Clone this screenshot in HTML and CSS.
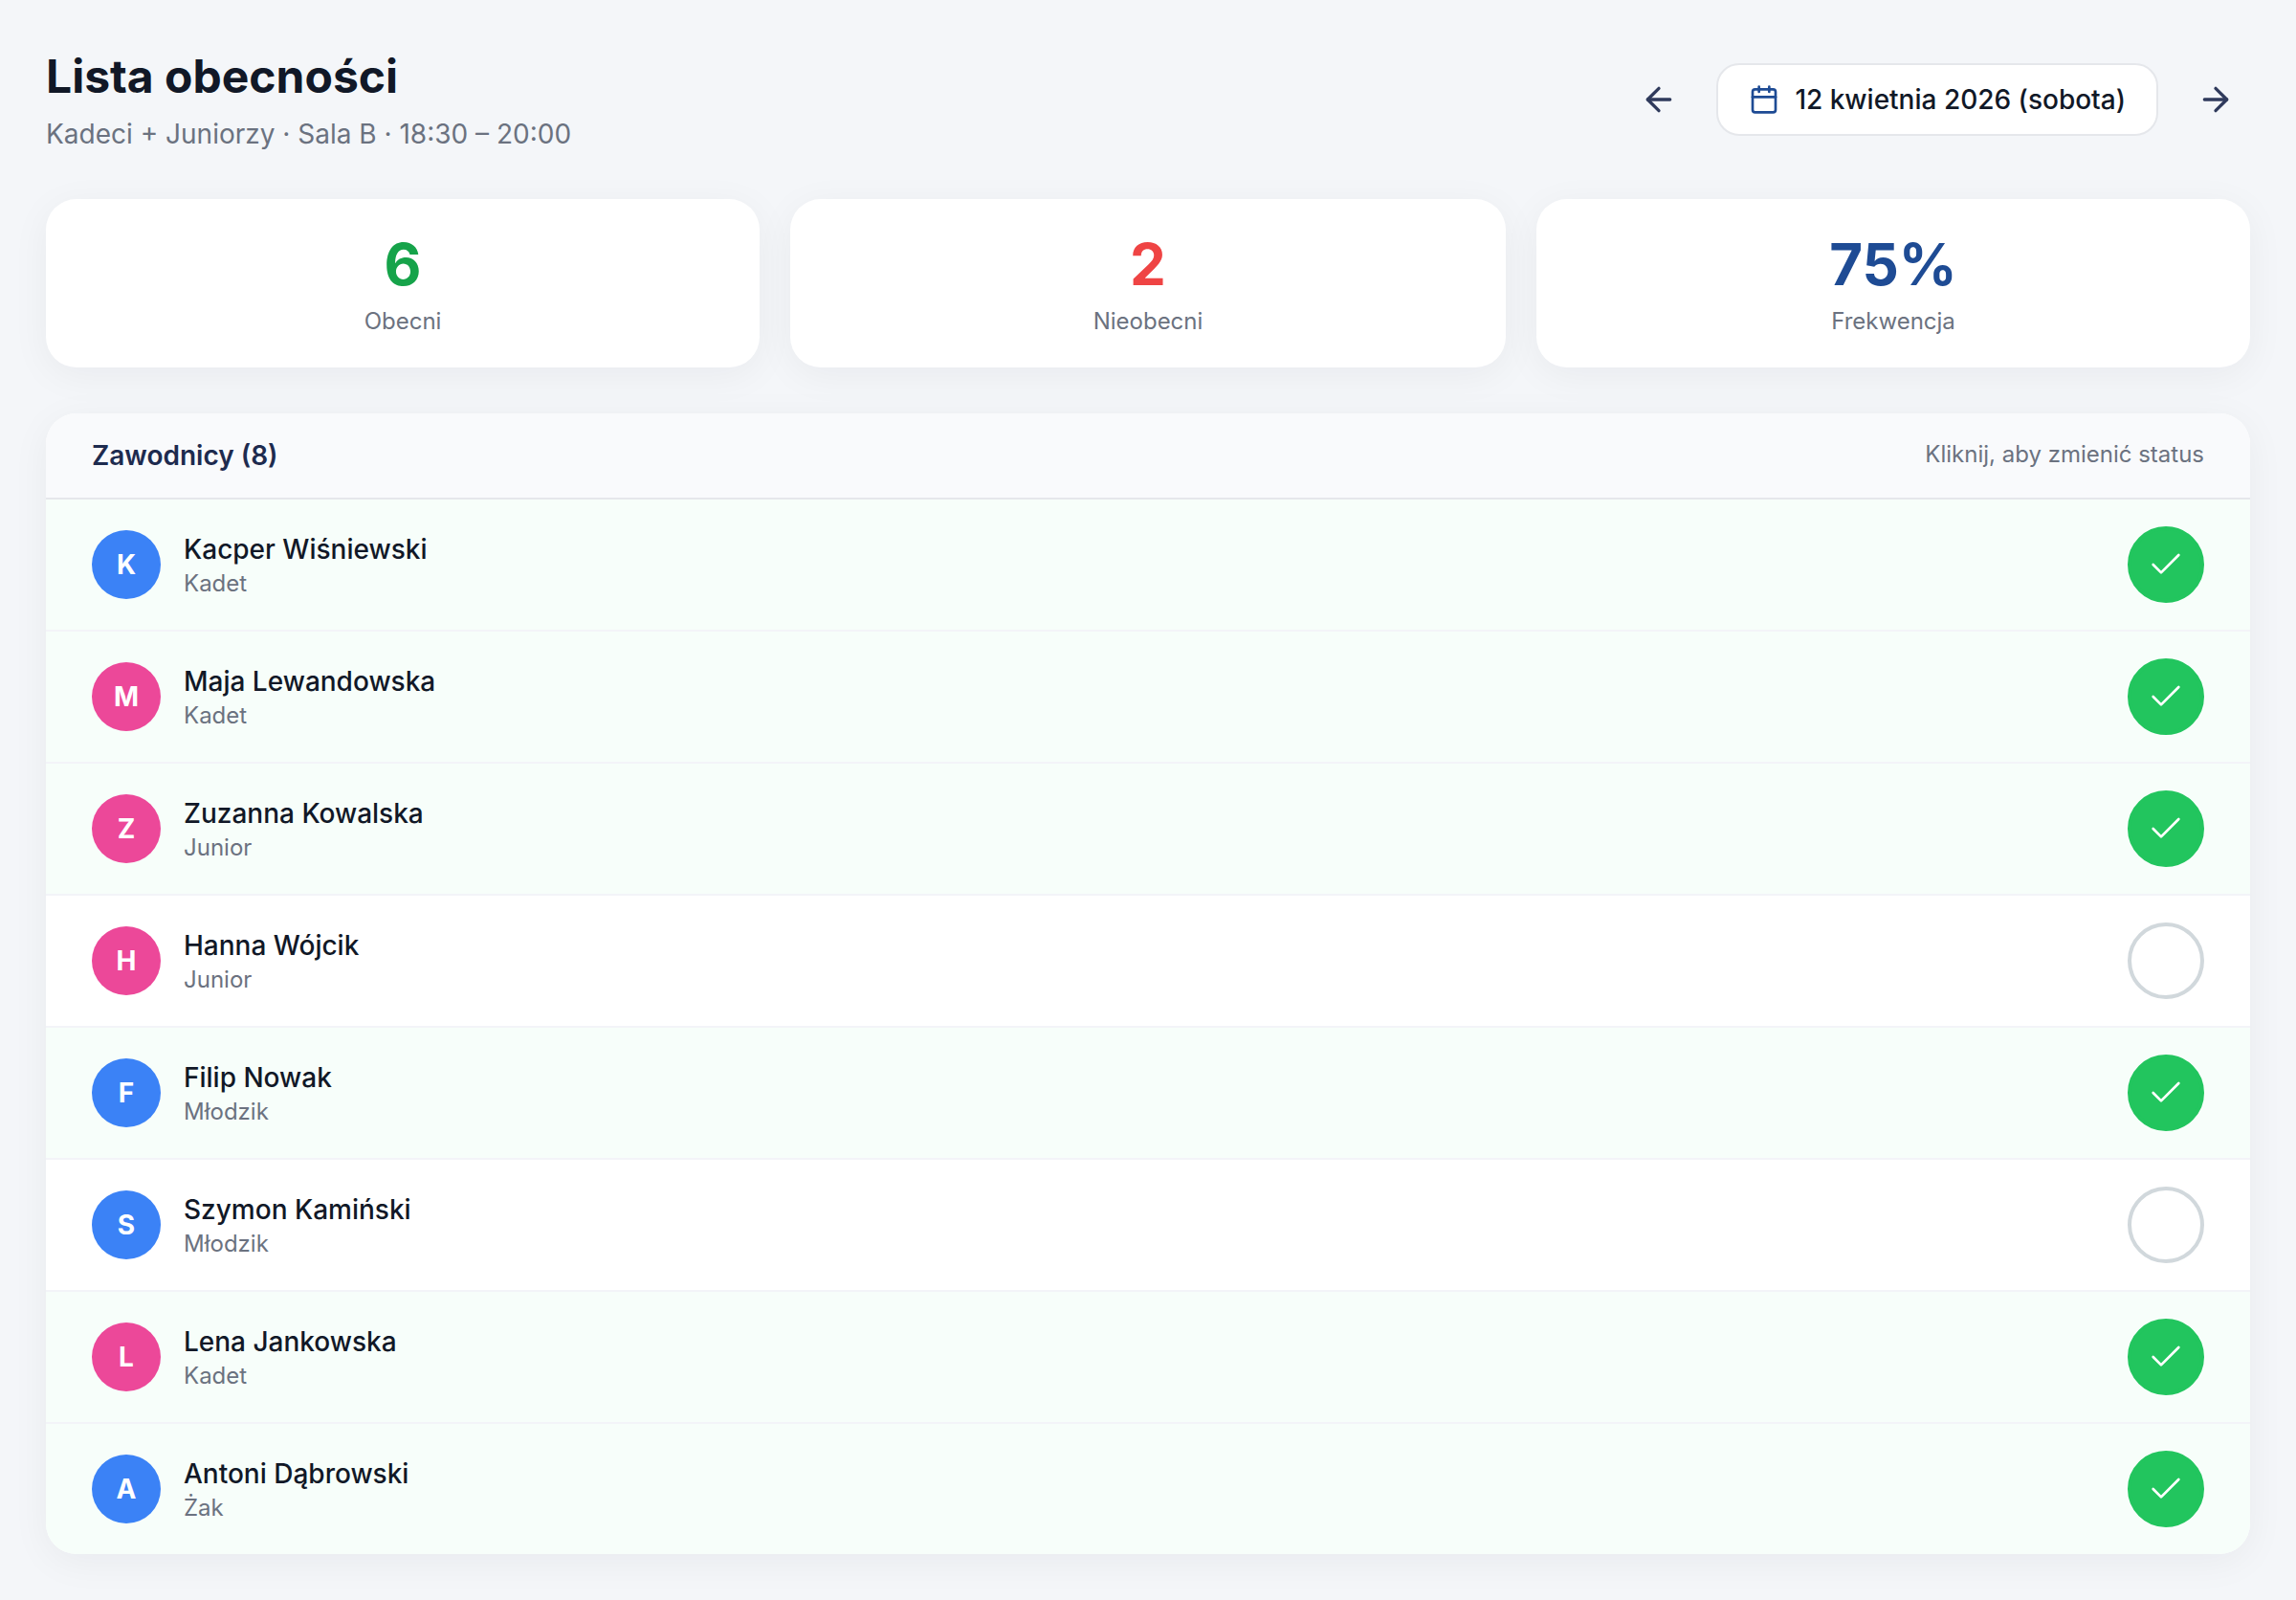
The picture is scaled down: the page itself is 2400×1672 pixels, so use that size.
FILE: index.html
```html
<!doctype html>
<html lang="pl">
  <head>
    <meta charset="UTF-8" />
    <title>Lista obecności</title>
    <link rel="stylesheet" href="styles.css">
  </head>
  <body>
    <div class="container">
      <header class="top">
        <div>
          <h1>Lista obecności</h1>
          <p class="subtitle">Kadeci + Juniorzy · Sala B · 18:30 – 20:00</p>
        </div>
        <div class="date-nav">
          <button class="arrow">
            <svg viewBox="0 0 24 24"><path d="M19 12H5"/><path d="M12 19l-7-7 7-7"/></svg>
          </button>
          <div class="date-pill">
            <svg viewBox="0 0 24 24"><rect x="3" y="4" width="18" height="18" rx="2"/><path d="M16 2v4"/><path d="M8 2v4"/><path d="M3 10h18"/></svg>
            <span>12 kwietnia 2026 (sobota)</span>
          </div>
          <button class="arrow">
            <svg viewBox="0 0 24 24"><path d="M5 12h14"/><path d="M12 5l7 7-7 7"/></svg>
          </button>
        </div>
      </header>

      <section class="stats">
        <div class="stat"><div class="stat-value green">6</div><div class="stat-label">Obecni</div></div>
        <div class="stat"><div class="stat-value red">2</div><div class="stat-label">Nieobecni</div></div>
        <div class="stat"><div class="stat-value navy">75%</div><div class="stat-label">Frekwencja</div></div>
      </section>

      <section class="card">
        <div class="card-head">
          <h2>Zawodnicy (8)</h2>
          <span>Kliknij, aby zmienić status</span>
        </div>

        <div class="row present">
          <div class="avatar blue">K</div>
          <div class="player"><div class="name">Kacper Wiśniewski</div><div class="group">Kadet</div></div>
          <button class="toggle"><svg viewBox="0 0 24 24"><path d="M20 6 9 17l-5-5"/></svg></button>
        </div>
        <div class="row present">
          <div class="avatar pink">M</div>
          <div class="player"><div class="name">Maja Lewandowska</div><div class="group">Kadet</div></div>
          <button class="toggle"><svg viewBox="0 0 24 24"><path d="M20 6 9 17l-5-5"/></svg></button>
        </div>
        <div class="row present">
          <div class="avatar pink">Z</div>
          <div class="player"><div class="name">Zuzanna Kowalska</div><div class="group">Junior</div></div>
          <button class="toggle"><svg viewBox="0 0 24 24"><path d="M20 6 9 17l-5-5"/></svg></button>
        </div>
        <div class="row">
          <div class="avatar pink">H</div>
          <div class="player"><div class="name">Hanna Wójcik</div><div class="group">Junior</div></div>
          <button class="toggle"></button>
        </div>
        <div class="row present">
          <div class="avatar blue">F</div>
          <div class="player"><div class="name">Filip Nowak</div><div class="group">Młodzik</div></div>
          <button class="toggle"><svg viewBox="0 0 24 24"><path d="M20 6 9 17l-5-5"/></svg></button>
        </div>
        <div class="row">
          <div class="avatar blue">S</div>
          <div class="player"><div class="name">Szymon Kamiński</div><div class="group">Młodzik</div></div>
          <button class="toggle"></button>
        </div>
        <div class="row present">
          <div class="avatar pink">L</div>
          <div class="player"><div class="name">Lena Jankowska</div><div class="group">Kadet</div></div>
          <button class="toggle"><svg viewBox="0 0 24 24"><path d="M20 6 9 17l-5-5"/></svg></button>
        </div>
        <div class="row present">
          <div class="avatar blue">A</div>
          <div class="player"><div class="name">Antoni Dąbrowski</div><div class="group">Żak</div></div>
          <button class="toggle"><svg viewBox="0 0 24 24"><path d="M20 6 9 17l-5-5"/></svg></button>
        </div>
      </section>
    </div>
  </body>
</html>
```

FILE: styles.css
```css
* {
  box-sizing: border-box;
}

body {
  font-family: Inter, "Liberation Sans", sans-serif;
  margin: 0;
  background: #f4f6f9;
  color: #111827;
}

.container {
  padding: 48px;
}

.top {
  display: flex;
  justify-content: space-between;
  align-items: center;
  height: 112px;
  margin-bottom: 48px;
}

h1 {
  margin: 0 0 8px;
  font-size: 48px;
  line-height: 64px;
  font-weight: 700;
  color: #111827;
}

.subtitle {
  margin: 0;
  font-size: 28px;
  line-height: 40px;
  color: #6b7280;
}

.date-nav {
  display: flex;
  align-items: center;
  gap: 24px;
}

.arrow {
  width: 72px;
  height: 72px;
  padding: 16px;
  border: none;
  background: none;
}

.arrow svg {
  display: block;
  width: 40px;
  height: 40px;
  fill: none;
  stroke: #2f3a5c;
  stroke-width: 2;
  stroke-linecap: round;
  stroke-linejoin: round;
}

.date-pill {
  display: flex;
  align-items: center;
  gap: 16px;
  height: 76px;
  padding: 0 32px;
  background: #fff;
  border: 2px solid #e5e7eb;
  border-radius: 24px;
  font-size: 28px;
  font-weight: 500;
  color: #111827;
}

.date-pill svg {
  width: 32px;
  height: 32px;
  fill: none;
  stroke: #1e4b94;
  stroke-width: 2;
  stroke-linecap: round;
  stroke-linejoin: round;
}

.stats {
  display: grid;
  grid-template-columns: 746px 1fr 746px;
  gap: 32px;
  margin-bottom: 48px;
}

.stat {
  height: 176px;
  padding-top: 32px;
  background: #fff;
  border-radius: 32px;
  text-align: center;
  box-shadow: 0 8px 40px rgba(17, 24, 39, 0.05);
}

.stat-value {
  font-size: 60px;
  line-height: 72px;
  font-weight: 700;
}

.stat-label {
  margin-top: 6px;
  font-size: 24px;
  line-height: 36px;
  color: #6b7280;
}

.green { color: #16a34a; }
.red { color: #ef4444; }
.navy { color: #1e4b94; }

.card {
  background: #fff;
  border-radius: 32px;
  overflow: hidden;
  box-shadow: 0 8px 40px rgba(17, 24, 39, 0.05);
}

.card-head {
  display: flex;
  justify-content: space-between;
  align-items: center;
  height: 90px;
  padding: 0 48px;
  background: #f9fafc;
  border-bottom: 2px solid #e5e7eb;
}

h2 {
  margin: 0;
  font-size: 28px;
  font-weight: 600;
  color: #1e2b4f;
}

.card-head span {
  margin-bottom: 3px;
  font-size: 24px;
  color: #6b7280;
}

.row {
  display: flex;
  align-items: center;
  gap: 24px;
  height: 138px;
  padding: 0 48px;
  border-bottom: 2px solid #f3f4f8;
}

.row:last-child {
  height: 136px;
  border-bottom: none;
}

.present {
  background: #f7fefa;
}

.avatar {
  flex: none;
  display: flex;
  align-items: center;
  justify-content: center;
  width: 72px;
  height: 72px;
  border-radius: 50%;
  color: #fff;
  font-size: 28px;
  font-weight: 700;
}

.blue { background: #3b82f6; }
.pink { background: #ec4899; }

.player {
  flex: 1;
  padding-top: 2px;
}

.name {
  font-size: 28px;
  line-height: 36px;
  font-weight: 500;
  color: #111827;
}

.group {
  margin-top: 2px;
  font-size: 24px;
  line-height: 32px;
  color: #6b7280;
}

.toggle {
  display: flex;
  align-items: center;
  justify-content: center;
  width: 80px;
  height: 80px;
  padding: 0;
  background: #fff;
  border: 4px solid #d1d8dc;
  border-radius: 50%;
}

.present .toggle {
  background: #22c55e;
  border-color: #22c55e;
}

.toggle svg {
  width: 40px;
  height: 40px;
  fill: none;
  stroke: #fff;
  stroke-width: 1.6;
  stroke-linecap: round;
  stroke-linejoin: round;
}
```
